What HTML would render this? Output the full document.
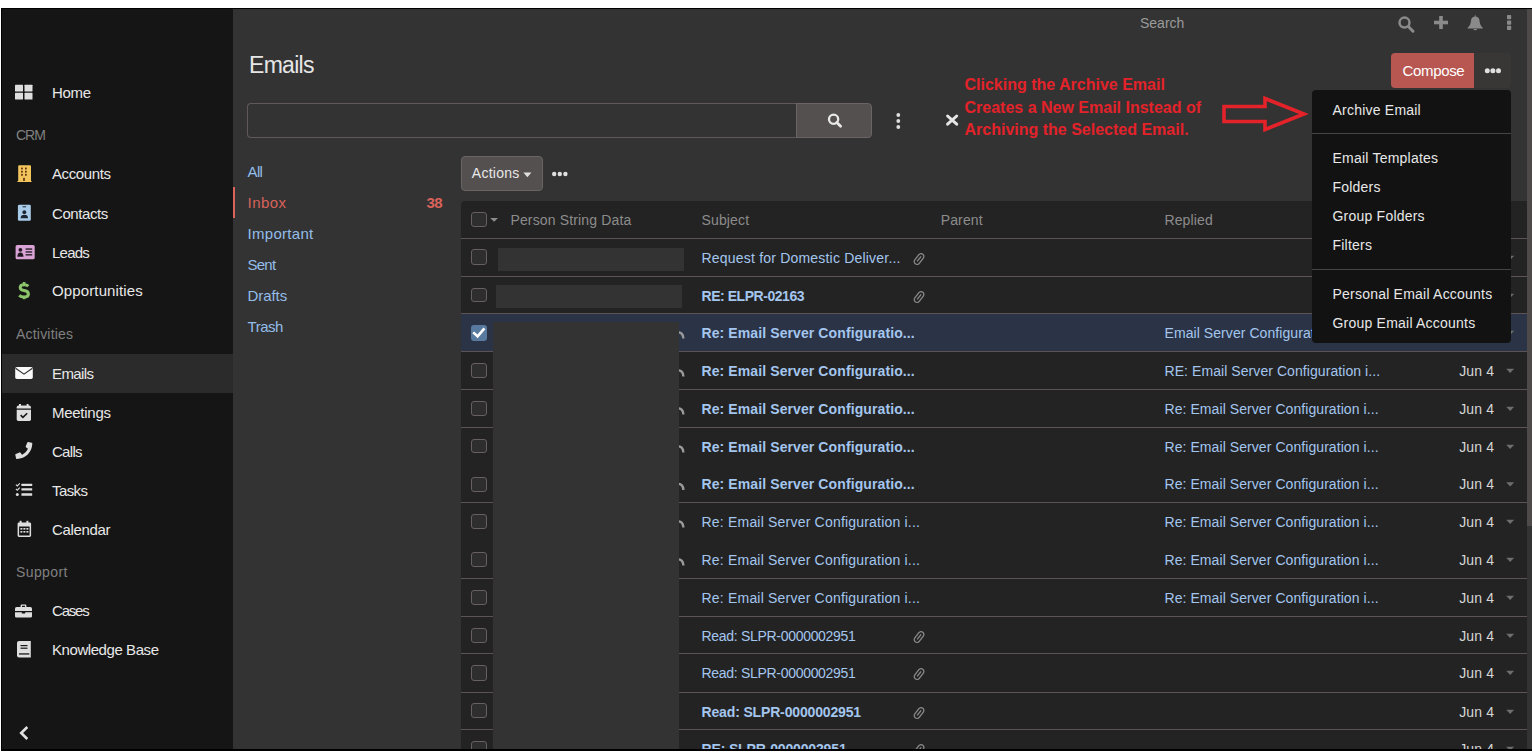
<!DOCTYPE html><html><head><meta charset="utf-8"><style>
html,body{margin:0;padding:0;width:1532px;height:756px;overflow:hidden;background:#fff;}
body{position:relative;font-family:"Liberation Sans",sans-serif;}
.a{position:absolute;box-sizing:border-box;}
.t{position:absolute;line-height:1;white-space:nowrap;}
svg{position:absolute;overflow:visible;}
</style></head><body>
<div class="a" style="left:1px;top:8px;width:1531px;height:743px;background:#000;"></div>
<div style="position:absolute;left:0;top:0;width:1532px;height:749px;overflow:hidden">
<div class="a" style="left:2px;top:9px;width:231px;height:740px;background:#151515;"></div>
<div class="a" style="left:233px;top:9px;width:1299px;height:740px;background:#333333;"></div>
<div class="a" style="left:1527px;top:9px;width:5px;height:517px;background:#4e4a4a;"></div>
<div class="a" style="left:2px;top:354px;width:231px;height:39px;background:#2b2b2b;"></div>
<div class="t" style="left:52px;top:84.54px;font-size:15px;color:#e8e8e8;letter-spacing:-0.34px;">Home</div>
<div class="t" style="left:16px;top:127.67px;font-size:14px;color:#808080;letter-spacing:-1px;">CRM</div>
<div class="t" style="left:52px;top:166.04px;font-size:15px;color:#e8e8e8;letter-spacing:-0.39px;">Accounts</div>
<div class="t" style="left:52px;top:205.54px;font-size:15px;color:#e8e8e8;letter-spacing:-0.41px;">Contacts</div>
<div class="t" style="left:52px;top:244.54px;font-size:15px;color:#e8e8e8;letter-spacing:-0.77px;">Leads</div>
<div class="t" style="left:52px;top:282.54px;font-size:15px;color:#e8e8e8;letter-spacing:0.13px;">Opportunities</div>
<div class="t" style="left:16px;top:326.67px;font-size:14px;color:#808080;letter-spacing:0.2px;">Activities</div>
<div class="t" style="left:52px;top:365.74px;font-size:15px;color:#e8e8e8;letter-spacing:-0.6px;">Emails</div>
<div class="t" style="left:52px;top:404.74px;font-size:15px;color:#e8e8e8;letter-spacing:-0.27px;">Meetings</div>
<div class="t" style="left:52px;top:443.54px;font-size:15px;color:#e8e8e8;letter-spacing:-0.71px;">Calls</div>
<div class="t" style="left:52px;top:482.54px;font-size:15px;color:#e8e8e8;letter-spacing:-0.59px;">Tasks</div>
<div class="t" style="left:52px;top:521.74px;font-size:15px;color:#e8e8e8;letter-spacing:-0.35px;">Calendar</div>
<div class="t" style="left:16px;top:564.87px;font-size:14px;color:#808080;letter-spacing:0.4px;">Support</div>
<div class="t" style="left:52px;top:603.04px;font-size:15px;color:#e8e8e8;letter-spacing:-1.2px;">Cases</div>
<div class="t" style="left:52px;top:641.54px;font-size:15px;color:#e8e8e8;letter-spacing:-0.43px;">Knowledge Base</div>
<svg style="left:0;top:0" width="1" height="1"><g fill="#dedede"><rect x="15" y="84.7" width="8" height="6.8" rx="0.6"/><rect x="24.5" y="84.7" width="8" height="6.8" rx="0.6"/><rect x="15" y="92.8" width="8" height="6.7" rx="0.6"/><rect x="24.5" y="92.8" width="8" height="6.7" rx="0.6"/></g></svg>
<svg style="left:0;top:0" width="1" height="1"><path d="M18.2 166.3 Q18.2 165.3 19.2 165.3 L30 165.3 Q31 165.3 31 166.3 L31 181 L31.6 181 L31.6 182 L17.4 182 L17.4 181 L18.2 181 Z" fill="#f2c55c"/><g fill="#5a2a10"><rect x="21.1" y="167.6" width="1.7" height="1.8"/><rect x="25" y="167.6" width="1.7" height="1.8"/><rect x="21.1" y="170.8" width="1.7" height="1.8"/><rect x="25" y="170.8" width="1.7" height="1.8"/><rect x="21.1" y="173.9" width="1.7" height="1.8"/><rect x="25" y="173.9" width="1.7" height="1.8"/><rect x="23.2" y="177.8" width="1.6" height="3.2"/></g></svg>
<svg style="left:0;top:0" width="1" height="1"><rect x="17.9" y="204.7" width="12.9" height="16.1" rx="1.3" fill="#a9cbea"/><g fill="#1c2430"><rect x="22.6" y="206.3" width="3.5" height="1"/><circle cx="24.35" cy="212.2" r="1.9"/><path d="M20.6 218.2 Q20.8 214.8 24.35 214.8 Q27.9 214.8 28.1 218.2 Z"/></g></svg>
<svg style="left:0;top:0" width="1" height="1"><rect x="15.6" y="245" width="19.1" height="14.3" rx="1.5" fill="#d9a3d5"/><g fill="#1f1620"><circle cx="20.4" cy="249.8" r="1.9"/><path d="M17.3 256.8 Q17.5 252.6 20.4 252.6 Q23.3 252.6 23.5 256.8 Z"/><rect x="25.6" y="248.4" width="6.6" height="1.3"/><rect x="25.6" y="251.3" width="6.6" height="1.3"/><rect x="25.6" y="254.2" width="6.6" height="1.3"/></g></svg>
<svg style="left:0;top:0" width="1" height="1"><path d="M28.4 286.1 Q26.8 284.7 24.1 284.7 Q20.2 284.7 20.2 287.6 Q20.2 290.1 24.1 290.6 Q28.4 291.2 28.4 294 Q28.4 297 24 297 Q21 297 19.2 295.3" fill="none" stroke="#8cc46b" stroke-width="3"/><rect x="22.8" y="282" width="2.6" height="3.5" fill="#8cc46b"/><rect x="22.8" y="296" width="2.6" height="3.2" fill="#8cc46b"/></svg>
<svg style="left:0;top:0" width="1" height="1"><rect x="15.2" y="366.9" width="17.6" height="12" rx="1.6" fill="#fafafa"/><path d="M15.6 368.3 L24 374.2 L32.4 368.3" fill="none" stroke="#2b2b2b" stroke-width="1.1"/></svg>
<svg style="left:0;top:0" width="1" height="1"><g fill="#dedede"><rect x="19" y="404" width="2" height="3"/><rect x="26.6" y="404" width="2" height="3"/><path d="M16.7 407.3 Q16.7 405.5 18.5 405.5 L29.2 405.5 Q31 405.5 31 407.3 L31 408.6 L16.7 408.6 Z"/><path d="M16.7 409.8 L31 409.8 L31 419.3 Q31 420.9 29.4 420.9 L18.3 420.9 Q16.7 420.9 16.7 419.3 Z"/></g><path d="M20.6 415.2 L22.9 417.4 L27.2 413.2" fill="none" stroke="#181818" stroke-width="1.6"/></svg>
<svg style="left:0;top:0" width="1" height="1"><path transform="translate(15.3 442) scale(0.0332)" d="M493.4 24.6l-104-24c-11.3-2.6-22.9 3.3-27.5 13.9l-48 112c-4.2 9.8-1.4 21.3 6.9 28l60.6 49.6c-36 76.7-98.9 140.5-177.2 177.2l-49.6-60.6c-6.8-8.3-18.2-11.1-28-6.9l-112 48C3.9 366.5-2 378.1.6 389.4l24 104C27.1 504.2 36.7 512 48 512c256.1 0 464-207.5 464-464 0-11.2-7.7-20.9-18.6-23.4z" fill="#dedede"/></svg>
<svg style="left:0;top:0" width="1" height="1"><path d="M15.9 484.6 L17.3 485.9 L19.8 483.3 M15.9 488.9 L17.3 490.2 L19.8 487.6" fill="none" stroke="#dedede" stroke-width="1.1"/><g fill="#dedede"><circle cx="17.3" cy="494.4" r="1.5"/><rect x="21.4" y="483.7" width="10.8" height="2.3" rx="0.5"/><rect x="21.4" y="488.3" width="10.8" height="2.3" rx="0.5"/><rect x="21.4" y="493.3" width="10.8" height="2.5" rx="0.5"/></g></svg>
<svg style="left:0;top:0" width="1" height="1"><g fill="#dedede"><rect x="19.6" y="520.8" width="2" height="2.6"/><rect x="26.4" y="520.8" width="2" height="2.6"/><path fill-rule="evenodd" d="M17.6 523.8 Q17.6 522.4 19 522.4 L29.7 522.4 Q31.1 522.4 31.1 523.8 L31.1 535.6 Q31.1 537 29.7 537 L19 537 Q17.6 537 17.6 535.6 Z M19.1 526.6 L19.1 535.5 L29.6 535.5 L29.6 526.6 Z"/><rect x="20.4" y="528" width="2" height="1.6"/><rect x="23.4" y="528" width="2" height="1.6"/><rect x="26.4" y="528" width="2" height="1.6"/><rect x="20.4" y="531" width="2" height="1.6"/><rect x="23.4" y="531" width="2" height="1.6"/><rect x="26.4" y="531" width="2" height="1.6"/></g></svg>
<svg style="left:0;top:0" width="1" height="1"><g fill="#dedede"><path fill-rule="evenodd" d="M20.6 607 L20.6 605.4 Q20.6 604.5 21.5 604.5 L25.5 604.5 Q26.4 604.5 26.4 605.4 L26.4 607 L25 607 L25 605.8 L22 605.8 L22 607 Z"/><path d="M15 608.6 Q15 607 16.6 607 L30.4 607 Q32 607 32 608.6 L32 611 L15 611 Z"/><path d="M15 612.3 L21.8 612.3 L21.8 613.6 L25.2 613.6 L25.2 612.3 L32 612.3 L32 616.2 Q32 617.6 30.6 617.6 L16.4 617.6 Q15 617.6 15 616.2 Z"/></g></svg>
<svg style="left:0;top:0" width="1" height="1"><path d="M17 643 Q17 641 19 641 L30.8 641 L30.8 657.6 L19 657.6 Q17 657.6 17 655.6 Z" fill="#dedede"/><g fill="#181818"><rect x="20.5" y="645" width="7" height="1.2"/><rect x="20.5" y="647.6" width="7" height="1.2"/><rect x="19" y="653.3" width="10.3" height="1.3"/></g></svg>
<svg style="left:0;top:0" width="1" height="1"><path d="M27.3 727 L21.2 733 L27.3 739" fill="none" stroke="#e0e0e0" stroke-width="2.6"/></svg>
<div class="t" style="left:249px;top:53.60px;font-size:23px;color:#e6e6e6;letter-spacing:-0.7px;">Emails</div>
<div class="a" style="left:247px;top:103px;width:550px;height:35px;background:#333333;border:1px solid #5f5959;border-right:none;border-radius:4px 0 0 4px;"></div>
<div class="a" style="left:796px;top:103px;width:76px;height:35px;background:#545050;border:1px solid #6a6464;border-radius:0 4px 4px 0;"></div>
<svg style="left:0;top:0" width="1" height="1"><circle cx="833.6" cy="119.2" r="4.6" fill="none" stroke="#e8e8e8" stroke-width="2.3"/><path d="M836.8 122.4 L840.6 126.2" stroke="#e8e8e8" stroke-width="2.8" stroke-linecap="round"/></svg>
<svg style="left:0;top:0" width="1" height="1"><g fill="#e0e0e0"><circle cx="898.3" cy="115" r="1.9"/><circle cx="898.3" cy="121" r="1.9"/><circle cx="898.3" cy="127" r="1.9"/></g></svg>
<svg style="left:0;top:0" width="1" height="1"><path d="M947.6 116 L956.7 124.2 M956.7 116 L947.6 124.2" stroke="#e6e6e6" stroke-width="3" stroke-linecap="round"/></svg>
<div class="t" style="left:964.5px;top:77.11px;font-size:16px;color:#e3222a;font-weight:700;">Clicking the Archive Email</div>
<div class="t" style="left:964.5px;top:100.31px;font-size:16px;color:#e3222a;font-weight:700;">Creates a New Email Instead of</div>
<div class="t" style="left:964.5px;top:121.81px;font-size:16px;color:#e3222a;font-weight:700;">Archiving the Selected Email.</div>
<svg style="left:0;top:0" width="1" height="1"><path d="M1224 106.5 L1265 106.5 L1265 98.5 L1304 114 L1265 129.5 L1265 121.5 L1224 121.5 Z" fill="none" stroke="#e3222a" stroke-width="3.6" stroke-linejoin="miter"/></svg>
<div class="t" style="left:1140px;top:15.77px;font-size:14px;color:#9a9a9a;">Search</div>
<svg style="left:0;top:0" width="1" height="1"><circle cx="1404.5" cy="22.6" r="5" fill="none" stroke="#8a8a8a" stroke-width="2.5"/><path d="M1408.6 26.8 L1413 31.2" stroke="#8a8a8a" stroke-width="3" stroke-linecap="round"/><rect x="1439.2" y="16" width="3.6" height="13" fill="#8a8a8a"/><rect x="1434" y="20.7" width="14" height="3.6" fill="#8a8a8a"/><path d="M1474.9 15 L1475.5 15 L1475.7 16.6 Q1479.2 17.2 1479.5 20.5 Q1479.9 25.6 1482.7 27.6 L1482.7 28.4 L1467.7 28.4 L1467.7 27.6 Q1470.6 25.6 1471 20.5 Q1471.3 17.2 1474.7 16.6 Z" fill="#8a8a8a"/><path d="M1473.3 29.1 L1477.3 29.1 Q1476.8 30.3 1475.3 30.3 Q1473.8 30.3 1473.3 29.1 Z" fill="#8a8a8a"/><rect x="1507" y="15" width="4.2" height="4.2" rx="0.8" fill="#8a8a8a"/><rect x="1507" y="20.6" width="4.2" height="4.2" rx="0.8" fill="#8a8a8a"/><rect x="1507" y="25.8" width="4.2" height="4.2" rx="0.8" fill="#8a8a8a"/></svg>
<div class="a" style="left:1391px;top:53px;width:83px;height:35px;background:#b85752;border-radius:4px 0 0 4px;"></div>
<div class="a" style="left:1474px;top:53px;width:37px;height:35px;background:#383736;border-radius:0 4px 4px 0;"></div>
<div class="t" style="left:1402.6px;top:62.54px;font-size:15px;color:#ffffff;letter-spacing:-0.35px;">Compose</div>
<svg style="left:0;top:0" width="1" height="1"><g fill="#e0e0e0"><circle cx="1487.3" cy="70.7" r="2.5"/><circle cx="1492.9" cy="70.7" r="2.5"/><circle cx="1498.5" cy="70.7" r="2.5"/></g></svg>
<div class="t" style="left:247.6px;top:163.74px;font-size:15px;color:#94bde9;letter-spacing:-0.69px;">All</div>
<div class="t" style="left:247.6px;top:194.74px;font-size:15px;color:#d9625a;letter-spacing:0.4px;">Inbox</div>
<div class="t" style="left:247.6px;top:225.74px;font-size:15px;color:#94bde9;letter-spacing:0.28px;">Important</div>
<div class="t" style="left:247.6px;top:257.24px;font-size:15px;color:#94bde9;letter-spacing:-0.79px;">Sent</div>
<div class="t" style="left:247.6px;top:288.04px;font-size:15px;color:#94bde9;letter-spacing:-0.08px;">Drafts</div>
<div class="t" style="left:247.6px;top:318.74px;font-size:15px;color:#94bde9;letter-spacing:-0.52px;">Trash</div>
<div class="a" style="left:233px;top:187px;width:2px;height:31px;background:#d9625a;"></div>
<div class="t" style="left:426.5px;top:194.74px;font-size:15px;color:#d9625a;font-weight:700;letter-spacing:-0.6px;">38</div>
<div class="a" style="left:461px;top:156px;width:82px;height:35px;background:#545050;border:1px solid #6a6464;border-radius:4px;"></div>
<div class="t" style="left:471.8px;top:166.47px;font-size:14px;color:#e8e8e8;letter-spacing:0.25px;">Actions</div>
<svg style="left:0;top:0" width="1" height="1"><path d="M523.4 172.4 L531.4 172.4 L527.4 177.2 Z" fill="#e0e0e0"/><g fill="#e0e0e0"><circle cx="554.2" cy="174" r="2.2"/><circle cx="559.8" cy="174" r="2.2"/><circle cx="565.4" cy="174" r="2.2"/></g></svg>
<div class="a" style="left:461px;top:201px;width:1066px;height:548px;background:#232323;border-radius:4px 0 0 0;"></div>
<div class="a" style="left:461px;top:238px;width:1066px;height:1px;background:#5c5454;"></div>
<div class="a" style="left:471px;top:212px;width:16px;height:15px;border:1px solid #666060;border-radius:3px;background:#2e2e2e"></div>
<svg style="left:0;top:0" width="1" height="1"><path d="M490.2 218 L498 218 L494.1 221.8 Z" fill="#8c8c8c"/></svg>
<div class="t" style="left:510.4px;top:213.07px;font-size:14px;color:#8c8c8c;letter-spacing:0.15px;">Person String Data</div>
<div class="t" style="left:701.5px;top:213.07px;font-size:14px;color:#8c8c8c;letter-spacing:0.15px;">Subject</div>
<div class="t" style="left:940.7px;top:213.07px;font-size:14px;color:#8c8c8c;letter-spacing:0.15px;">Parent</div>
<div class="t" style="left:1164.4px;top:213.07px;font-size:14px;color:#8c8c8c;letter-spacing:0.15px;">Replied</div>
<div class="a" style="left:461px;top:314px;width:1066px;height:37px;background:#2b3446;"></div>
<div class="a" style="left:461px;top:276px;width:1066px;height:1px;background:#5c5454;"></div>
<div class="a" style="left:461px;top:313px;width:1066px;height:1px;background:#5c5454;"></div>
<div class="a" style="left:461px;top:351px;width:1066px;height:1px;background:#5c5454;"></div>
<div class="a" style="left:461px;top:389px;width:1066px;height:1px;background:#5c5454;"></div>
<div class="a" style="left:461px;top:427px;width:1066px;height:1px;background:#5c5454;"></div>
<div class="a" style="left:461px;top:502px;width:1066px;height:1px;background:#5c5454;"></div>
<div class="a" style="left:461px;top:578px;width:1066px;height:1px;background:#5c5454;"></div>
<div class="a" style="left:461px;top:616px;width:1066px;height:1px;background:#5c5454;"></div>
<div class="a" style="left:461px;top:653px;width:1066px;height:1px;background:#5c5454;"></div>
<div class="a" style="left:461px;top:692px;width:1066px;height:1px;background:#5c5454;"></div>
<div class="a" style="left:461px;top:729px;width:1066px;height:1px;background:#5c5454;"></div>
<div class="a" style="left:471px;top:249px;width:16px;height:16px;border:1px solid #666060;border-radius:3px;background:#2e2e2e"></div>
<div class="t" style="left:701.5px;top:250.57px;font-size:14px;color:#a4c6ee;letter-spacing:0.2px;">Request for Domestic Deliver...</div>
<svg style="left:0;top:0" width="1" height="1"><g transform="translate(919 259.1) rotate(38)" fill="none" stroke="#8a8a8a" stroke-width="1.3"><rect x="-2.8" y="-6.2" width="5.6" height="12.2" rx="2.8"/><path d="M0 -3.5 L0 3"/></g></svg>
<svg style="left:0;top:0" width="1" height="1"><path d="M1506.2 255.7 L1514.1 255.7 L1510.15 259.9 Z" fill="#6e6e6e"/></svg>
<div class="a" style="left:471px;top:288px;width:16px;height:14px;border:1px solid #666060;border-radius:3px;background:#2e2e2e"></div>
<div class="t" style="left:701.5px;top:288.57px;font-size:14px;color:#a4c6ee;font-weight:700;letter-spacing:-0.45px;">RE: ELPR-02163</div>
<svg style="left:0;top:0" width="1" height="1"><g transform="translate(919 297.1) rotate(38)" fill="none" stroke="#8a8a8a" stroke-width="1.3"><rect x="-2.8" y="-6.2" width="5.6" height="12.2" rx="2.8"/><path d="M0 -3.5 L0 3"/></g></svg>
<svg style="left:0;top:0" width="1" height="1"><path d="M1506.2 293.7 L1514.1 293.7 L1510.15 297.9 Z" fill="#6e6e6e"/></svg>
<div class="a" style="left:471px;top:325px;width:16px;height:16px;border-radius:3px;background:#587a9e"></div>
<svg style="left:0;top:0" width="1" height="1"><path d="M473.2 332.4 L477.6 336.3 L484.4 328.4" fill="none" stroke="#fff" stroke-width="2.6"/></svg>
<svg style="left:0;top:0" width="1" height="1"><path d="M677 332.2 Q683.2 331.9 683.4 338.5" fill="none" stroke="#9a9a9a" stroke-width="2.4"/></svg>
<div class="t" style="left:701.5px;top:325.57px;font-size:14px;color:#a4c6ee;font-weight:700;letter-spacing:0.1px;">Re: Email Server Configuratio...</div>
<div class="t" style="left:1164.5px;top:325.57px;font-size:14px;color:#a4c6ee;letter-spacing:0.07px;">Email Server Configuration i...</div>
<svg style="left:0;top:0" width="1" height="1"><path d="M1506.2 330.7 L1514.1 330.7 L1510.15 334.9 Z" fill="#6e6e6e"/></svg>
<div class="a" style="left:471px;top:363px;width:16px;height:15px;border:1px solid #666060;border-radius:3px;background:#2e2e2e"></div>
<svg style="left:0;top:0" width="1" height="1"><path d="M677 370.2 Q683.2 369.9 683.4 376.5" fill="none" stroke="#9a9a9a" stroke-width="2.4"/></svg>
<div class="t" style="left:701.5px;top:363.57px;font-size:14px;color:#a4c6ee;font-weight:700;letter-spacing:0.1px;">Re: Email Server Configuratio...</div>
<div class="t" style="left:1164.5px;top:363.57px;font-size:14px;color:#a4c6ee;letter-spacing:0.07px;">RE: Email Server Configuration i...</div>
<div class="t" style="left:1459.2px;top:363.57px;font-size:14px;color:#d6d6d6;letter-spacing:0.15px;">Jun 4</div>
<svg style="left:0;top:0" width="1" height="1"><path d="M1506.2 368.7 L1514.1 368.7 L1510.15 372.9 Z" fill="#6e6e6e"/></svg>
<div class="a" style="left:471px;top:401px;width:16px;height:15px;border:1px solid #666060;border-radius:3px;background:#2e2e2e"></div>
<svg style="left:0;top:0" width="1" height="1"><path d="M677 408.2 Q683.2 407.9 683.4 414.5" fill="none" stroke="#9a9a9a" stroke-width="2.4"/></svg>
<div class="t" style="left:701.5px;top:401.57px;font-size:14px;color:#a4c6ee;font-weight:700;letter-spacing:0.1px;">Re: Email Server Configuratio...</div>
<div class="t" style="left:1164.5px;top:401.57px;font-size:14px;color:#a4c6ee;letter-spacing:0.07px;">Re: Email Server Configuration i...</div>
<div class="t" style="left:1459.2px;top:401.57px;font-size:14px;color:#d6d6d6;letter-spacing:0.15px;">Jun 4</div>
<svg style="left:0;top:0" width="1" height="1"><path d="M1506.2 406.7 L1514.1 406.7 L1510.15 410.9 Z" fill="#6e6e6e"/></svg>
<div class="a" style="left:471px;top:439px;width:16px;height:14px;border:1px solid #666060;border-radius:3px;background:#2e2e2e"></div>
<svg style="left:0;top:0" width="1" height="1"><path d="M677 446.2 Q683.2 445.9 683.4 452.5" fill="none" stroke="#9a9a9a" stroke-width="2.4"/></svg>
<div class="t" style="left:701.5px;top:439.57px;font-size:14px;color:#a4c6ee;font-weight:700;letter-spacing:0.1px;">Re: Email Server Configuratio...</div>
<div class="t" style="left:1164.5px;top:439.57px;font-size:14px;color:#a4c6ee;letter-spacing:0.07px;">Re: Email Server Configuration i...</div>
<div class="t" style="left:1459.2px;top:439.57px;font-size:14px;color:#d6d6d6;letter-spacing:0.15px;">Jun 4</div>
<svg style="left:0;top:0" width="1" height="1"><path d="M1506.2 444.7 L1514.1 444.7 L1510.15 448.9 Z" fill="#6e6e6e"/></svg>
<div class="a" style="left:471px;top:477px;width:16px;height:15px;border:1px solid #666060;border-radius:3px;background:#2e2e2e"></div>
<svg style="left:0;top:0" width="1" height="1"><path d="M677 483.7 Q683.2 483.4 683.4 490.0" fill="none" stroke="#9a9a9a" stroke-width="2.4"/></svg>
<div class="t" style="left:701.5px;top:477.07px;font-size:14px;color:#a4c6ee;font-weight:700;letter-spacing:0.1px;">Re: Email Server Configuratio...</div>
<div class="t" style="left:1164.5px;top:477.07px;font-size:14px;color:#a4c6ee;letter-spacing:0.07px;">Re: Email Server Configuration i...</div>
<div class="t" style="left:1459.2px;top:477.07px;font-size:14px;color:#d6d6d6;letter-spacing:0.15px;">Jun 4</div>
<svg style="left:0;top:0" width="1" height="1"><path d="M1506.2 482.2 L1514.1 482.2 L1510.15 486.4 Z" fill="#6e6e6e"/></svg>
<div class="a" style="left:471px;top:514px;width:16px;height:15px;border:1px solid #666060;border-radius:3px;background:#2e2e2e"></div>
<svg style="left:0;top:0" width="1" height="1"><path d="M677 521.2 Q683.2 520.9 683.4 527.5" fill="none" stroke="#9a9a9a" stroke-width="2.4"/></svg>
<div class="t" style="left:701.5px;top:514.57px;font-size:14px;color:#a4c6ee;letter-spacing:0.2px;">Re: Email Server Configuration i...</div>
<div class="t" style="left:1164.5px;top:514.57px;font-size:14px;color:#a4c6ee;letter-spacing:0.07px;">Re: Email Server Configuration i...</div>
<div class="t" style="left:1459.2px;top:514.57px;font-size:14px;color:#d6d6d6;letter-spacing:0.15px;">Jun 4</div>
<svg style="left:0;top:0" width="1" height="1"><path d="M1506.2 519.7 L1514.1 519.7 L1510.15 523.9 Z" fill="#6e6e6e"/></svg>
<div class="a" style="left:471px;top:552px;width:16px;height:15px;border:1px solid #666060;border-radius:3px;background:#2e2e2e"></div>
<svg style="left:0;top:0" width="1" height="1"><path d="M677 559.2 Q683.2 558.9 683.4 565.5" fill="none" stroke="#9a9a9a" stroke-width="2.4"/></svg>
<div class="t" style="left:701.5px;top:552.57px;font-size:14px;color:#a4c6ee;letter-spacing:0.2px;">Re: Email Server Configuration i...</div>
<div class="t" style="left:1164.5px;top:552.57px;font-size:14px;color:#a4c6ee;letter-spacing:0.07px;">Re: Email Server Configuration i...</div>
<div class="t" style="left:1459.2px;top:552.57px;font-size:14px;color:#d6d6d6;letter-spacing:0.15px;">Jun 4</div>
<svg style="left:0;top:0" width="1" height="1"><path d="M1506.2 557.7 L1514.1 557.7 L1510.15 561.9 Z" fill="#6e6e6e"/></svg>
<div class="a" style="left:471px;top:590px;width:16px;height:15px;border:1px solid #666060;border-radius:3px;background:#2e2e2e"></div>
<div class="t" style="left:701.5px;top:590.57px;font-size:14px;color:#a4c6ee;letter-spacing:0.2px;">Re: Email Server Configuration i...</div>
<div class="t" style="left:1164.5px;top:590.57px;font-size:14px;color:#a4c6ee;letter-spacing:0.07px;">Re: Email Server Configuration i...</div>
<div class="t" style="left:1459.2px;top:590.57px;font-size:14px;color:#d6d6d6;letter-spacing:0.15px;">Jun 4</div>
<svg style="left:0;top:0" width="1" height="1"><path d="M1506.2 595.7 L1514.1 595.7 L1510.15 599.9 Z" fill="#6e6e6e"/></svg>
<div class="a" style="left:471px;top:628px;width:16px;height:15px;border:1px solid #666060;border-radius:3px;background:#2e2e2e"></div>
<div class="t" style="left:701.5px;top:628.57px;font-size:14px;color:#a4c6ee;letter-spacing:-0.3px;">Read: SLPR-0000002951</div>
<svg style="left:0;top:0" width="1" height="1"><g transform="translate(919 637.1) rotate(38)" fill="none" stroke="#8a8a8a" stroke-width="1.3"><rect x="-2.8" y="-6.2" width="5.6" height="12.2" rx="2.8"/><path d="M0 -3.5 L0 3"/></g></svg>
<div class="t" style="left:1459.2px;top:628.57px;font-size:14px;color:#d6d6d6;letter-spacing:0.15px;">Jun 4</div>
<svg style="left:0;top:0" width="1" height="1"><path d="M1506.2 633.7 L1514.1 633.7 L1510.15 637.9 Z" fill="#6e6e6e"/></svg>
<div class="a" style="left:471px;top:665px;width:16px;height:16px;border:1px solid #666060;border-radius:3px;background:#2e2e2e"></div>
<div class="t" style="left:701.5px;top:665.57px;font-size:14px;color:#a4c6ee;letter-spacing:-0.3px;">Read: SLPR-0000002951</div>
<svg style="left:0;top:0" width="1" height="1"><g transform="translate(919 674.1) rotate(38)" fill="none" stroke="#8a8a8a" stroke-width="1.3"><rect x="-2.8" y="-6.2" width="5.6" height="12.2" rx="2.8"/><path d="M0 -3.5 L0 3"/></g></svg>
<div class="t" style="left:1459.2px;top:665.57px;font-size:14px;color:#d6d6d6;letter-spacing:0.15px;">Jun 4</div>
<svg style="left:0;top:0" width="1" height="1"><path d="M1506.2 670.7 L1514.1 670.7 L1510.15 674.9 Z" fill="#6e6e6e"/></svg>
<div class="a" style="left:471px;top:703px;width:16px;height:15px;border:1px solid #666060;border-radius:3px;background:#2e2e2e"></div>
<div class="t" style="left:701.5px;top:704.57px;font-size:14px;color:#a4c6ee;font-weight:700;letter-spacing:-0.15px;">Read: SLPR-0000002951</div>
<svg style="left:0;top:0" width="1" height="1"><g transform="translate(919 713.1) rotate(38)" fill="none" stroke="#8a8a8a" stroke-width="1.3"><rect x="-2.8" y="-6.2" width="5.6" height="12.2" rx="2.8"/><path d="M0 -3.5 L0 3"/></g></svg>
<div class="t" style="left:1459.2px;top:704.57px;font-size:14px;color:#d6d6d6;letter-spacing:0.15px;">Jun 4</div>
<svg style="left:0;top:0" width="1" height="1"><path d="M1506.2 709.7 L1514.1 709.7 L1510.15 713.9 Z" fill="#6e6e6e"/></svg>
<div class="a" style="left:471px;top:741px;width:16px;height:16px;border:1px solid #666060;border-radius:3px;background:#2e2e2e"></div>
<div class="t" style="left:701.5px;top:741.57px;font-size:14px;color:#a4c6ee;font-weight:700;letter-spacing:-0.15px;">RE: SLPR-0000002951</div>
<svg style="left:0;top:0" width="1" height="1"><g transform="translate(919 750.1) rotate(38)" fill="none" stroke="#8a8a8a" stroke-width="1.3"><rect x="-2.8" y="-6.2" width="5.6" height="12.2" rx="2.8"/><path d="M0 -3.5 L0 3"/></g></svg>
<div class="t" style="left:1459.2px;top:741.57px;font-size:14px;color:#d6d6d6;letter-spacing:0.15px;">Jun 4</div>
<svg style="left:0;top:0" width="1" height="1"><path d="M1506.2 746.7 L1514.1 746.7 L1510.15 750.9 Z" fill="#6e6e6e"/></svg>
<div class="a" style="left:498px;top:248px;width:186px;height:23px;background:#333333;"></div>
<div class="a" style="left:496px;top:285px;width:186px;height:23px;background:#333333;"></div>
<div class="a" style="left:493px;top:322px;width:186px;height:427px;background:#333333;"></div>
<div class="a" style="left:1312px;top:90px;width:199px;height:253px;background:#121212;border-radius:4px;"></div>
<div class="a" style="left:1312px;top:133px;width:199px;height:1px;background:#454545;"></div>
<div class="a" style="left:1312px;top:269px;width:199px;height:1px;background:#454545;"></div>
<div class="t" style="left:1332.5px;top:102.97px;font-size:14px;color:#e8e8e8;letter-spacing:0.22px;">Archive Email</div>
<div class="t" style="left:1332.5px;top:151.47px;font-size:14px;color:#e8e8e8;letter-spacing:0.22px;">Email Templates</div>
<div class="t" style="left:1332.5px;top:180.17px;font-size:14px;color:#e8e8e8;letter-spacing:0.22px;">Folders</div>
<div class="t" style="left:1332.5px;top:209.17px;font-size:14px;color:#e8e8e8;letter-spacing:0.22px;">Group Folders</div>
<div class="t" style="left:1332.5px;top:238.17px;font-size:14px;color:#e8e8e8;letter-spacing:0.22px;">Filters</div>
<div class="t" style="left:1332.5px;top:287.17px;font-size:14px;color:#e8e8e8;letter-spacing:0.22px;">Personal Email Accounts</div>
<div class="t" style="left:1332.5px;top:316.17px;font-size:14px;color:#e8e8e8;letter-spacing:0.22px;">Group Email Accounts</div>
</div></body></html>
